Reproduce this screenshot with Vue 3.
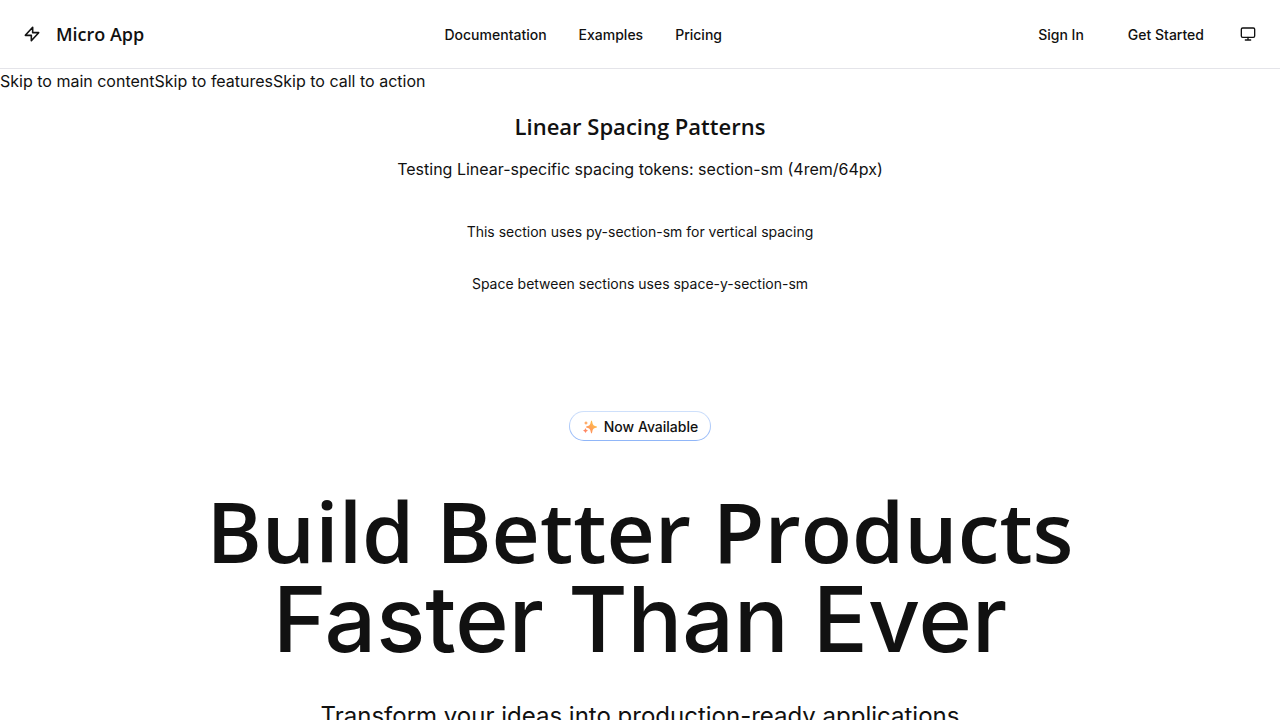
<script setup>
const navLinks = ['Documentation', 'Examples', 'Pricing']
const skipLinks = [
  { label: 'Skip to main content', href: '#main' },
  { label: 'Skip to features', href: '#features' },
  { label: 'Skip to call to action', href: '#cta' },
]
</script>

<template>
  <div class="page">
    <header class="header">
      <a class="brand" href="#">
        <svg class="icon bolt" viewBox="0 0 24 24" aria-hidden="true">
          <path d="M13 2v8h9L11 22v-8H2z" />
        </svg>
        <span class="brand-name">Micro App</span>
      </a>
      <nav class="nav" aria-label="Main">
        <a v-for="link in navLinks" :key="link" href="#">{{ link }}</a>
      </nav>
      <div class="actions">
        <a class="action" href="#">Sign In</a>
        <a class="action" href="#">Get Started</a>
        <button class="theme" type="button" aria-label="Toggle theme">
          <svg class="icon" viewBox="0 0 24 24" aria-hidden="true">
            <rect x="2" y="3" width="20" height="14" rx="2" />
            <path d="M8 21h8M12 17v4" />
          </svg>
        </button>
      </div>
    </header>

    <div class="skips">
      <a v-for="link in skipLinks" :key="link.href" :href="link.href">{{ link.label }}</a>
    </div>

    <main id="main">
      <section class="spacing">
        <h2>Linear Spacing Patterns</h2>
        <p class="lead">Testing Linear-specific spacing tokens: section-sm (4rem/64px)</p>
        <div class="samples">
          <p>This section uses py-section-sm for vertical spacing</p>
          <p>Space between sections uses space-y-section-sm</p>
        </div>
      </section>

      <section class="hero">
        <div class="badge">
          <svg class="sparkles" viewBox="0 0 16 16" aria-hidden="true">
            <defs>
              <linearGradient id="spark" gradientUnits="userSpaceOnUse" x1="2" y1="14" x2="13" y2="3">
                <stop offset="0" stop-color="#ff7d69" />
                <stop offset="1" stop-color="#ffc247" />
              </linearGradient>
            </defs>
            <g fill="url(#spark)">
              <path d="M9.500 1.500Q10 1.500 10.300 3.200C10.900 6 11.400 6.500 14 7.200Q15 7.500 15 8T14 8.800C11.400 9.500 10.900 10 10.300 12.800Q10 14.500 9.500 14.500T8.700 12.800C8.100 10 7.600 9.500 5 8.800Q4 8.500 4 8T5 7.200C7.600 6.500 8.100 6 8.700 3.200Q9 1.500 9.500 1.500Z" />
              <path d="M3.500 9Q4 11 6 11.500Q4 12 3.500 14Q3 12 1 11.500Q3 11 3.500 9Z" />
              <path d="M4 2Q4.400 3.600 6 4Q4.400 4.400 4 6Q3.600 4.400 2 4Q3.600 3.600 4 2Z" />
            </g>
          </svg>
          <span>Now Available</span>
        </div>
        <h1>
          <span class="line-one">Build Better Products</span>
          <span class="line-two">Faster Than Ever</span>
        </h1>
        <p class="tagline">Transform your ideas into production-ready applications</p>
      </section>
    </main>
  </div>
</template>

<style>
html {
  background: #fff;
}

body {
  height: 100vh;
  overflow: hidden;
}
</style>

<style scoped>
.page {
  background: #fff;
  color: #111;
  font: 400 16px/24px Inter, sans-serif;
}

a {
  color: inherit;
  text-decoration: none;
}

h1,
h2,
p {
  margin: 0;
}

.header {
  display: flex;
  justify-content: space-between;
  align-items: center;
  height: 68px;
  padding: 0 24px;
  border-bottom: 1px solid #e4e4e9;
}

.icon {
  display: block;
  width: 16px;
  height: 16px;
  fill: none;
  stroke: currentColor;
  stroke-width: 2;
  stroke-linecap: round;
  stroke-linejoin: round;
}

.bolt {
  stroke-width: 2.4;
}

.brand {
  display: flex;
  align-items: center;
  gap: 16px;
}

.brand-name {
  font: 600 18px/28px "Open Sans", "Noto Sans", sans-serif;
}

.nav {
  display: flex;
  gap: 32px;
  font-size: 14px;
  font-weight: 500;
  line-height: 21px;
}

.actions {
  display: flex;
  align-items: center;
  gap: 12px;
  font-size: 14px;
  font-weight: 500;
  line-height: 21px;
}

.action {
  padding: 0 16px;
}

.theme {
  padding: 8px 0 8px 8px;
  border: 0;
  background: none;
  color: inherit;
}

.skips {
  display: flex;
}

.spacing {
  padding-top: 16px;
  text-align: center;
}

h2 {
  font: 600 22px/34px "Open Sans", "Noto Sans", sans-serif;
}

.lead {
  margin-top: 14px;
}

.samples {
  display: grid;
  gap: 30px;
  margin-top: 40px;
  font-size: 14px;
  line-height: 22px;
}

.hero {
  display: flex;
  flex-direction: column;
  align-items: center;
  padding-top: 116px;
  text-align: center;
}

.badge {
  display: flex;
  align-items: center;
  gap: 6px;
  padding: 4px 12px 3px;
  border: 1px solid transparent;
  border-radius: 16px;
  background:
    linear-gradient(#fff, #fff) padding-box,
    linear-gradient(#cfe0fb, #8fb5f8) border-box;
  font-size: 14px;
  font-weight: 500;
  line-height: 21px;
}

.sparkles {
  width: 16px;
  height: 16px;
}

h1 {
  margin-top: 45px;
  font-weight: 500;
}

.line-one,
.line-two {
  display: block;
  line-height: 89px;
}

.line-one {
  font-family: "Open Sans", "Noto Sans", sans-serif;
  font-size: 84px;
  font-weight: 600;
}

.line-two {
  font-size: 91px;
}

.tagline {
  margin-top: 34px;
  font-size: 24px;
  line-height: 36px;
}
</style>
